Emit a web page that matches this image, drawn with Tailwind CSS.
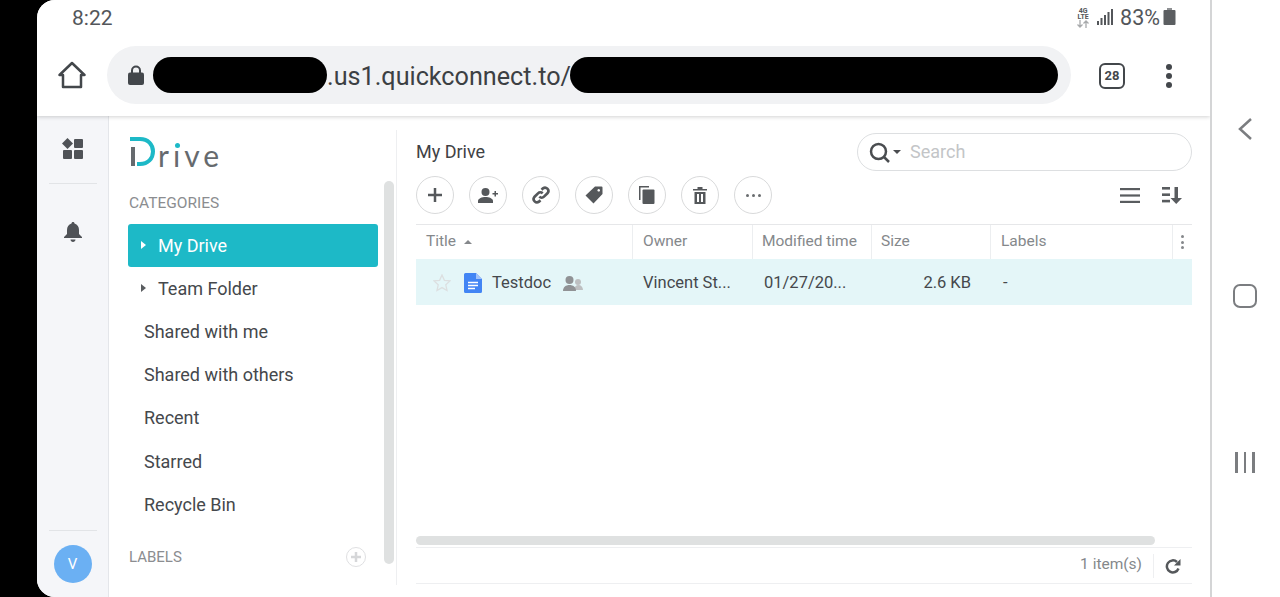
<!DOCTYPE html>
<html lang="en">
<head>
    <meta charset="UTF-8">
    <meta name="viewport" content="width=device-width, initial-scale=1.0">
    <title>Drive - My Drive</title>
    <script src="https://cdn.jsdelivr.net/npm/@tailwindcss/browser@4"></script>
</head>
<body class="bg-black font-[Roboto,sans-serif] overflow-hidden">
<div class="flex h-[597px] w-[1280px] pl-[37px]">
    <!-- phone screen -->
    <div class="w-[1175px] h-full bg-white rounded-l-[18px] overflow-hidden flex flex-col border-r-2 border-[#d4d5d6]">
        <!-- status bar + browser bar -->
        <div class="h-[116px] shrink-0 flex flex-col shadow-[0_1px_4px_rgba(0,0,0,0.18)] z-10 bg-white">
            <div class="h-[46px] flex justify-between pl-[35px] pr-[34px] pt-[5px] text-[#53565a]">
                <span class="text-[21px] leading-[26px]">8:22</span>
                <div class="flex items-start gap-[7px]">
                    <div class="flex flex-col items-center pt-[3px] w-[14px]">
                        <span class="text-[7px] leading-[6px] font-bold">4G</span>
                        <span class="text-[7px] leading-[6px] font-bold">LTE</span>
                        <svg width="14" height="8" viewBox="0 0 13 8" fill="none" stroke="#a8aaac" stroke-width="1.3"><path d="M3.5 0v7M1 4.5 3.5 7 6 4.5M9.5 8V1M7 3.500 9.500 1 12 3.500"/></svg>
                    </div>
                    <svg width="16" height="18" viewBox="0 0 16 18" fill="#53565a" class="mt-[4px]"><rect x="0" y="12" width="2" height="4"/><rect x="3.500" y="9" width="2" height="7"/><rect x="7" y="6" width="2" height="10"/><rect x="10.500" y="3" width="2" height="13"/><rect x="14" y="0" width="2" height="16"/></svg>
                    <span class="text-[21.500px] leading-[26px]">83%</span>
                    <svg width="13" height="18" viewBox="0 0 13 18" class="-ml-[4px] mt-[3px]"><path d="M4 0h5v2H4z" fill="#8e9093"/><rect x="0.500" y="2" width="12" height="15" rx="1" fill="#5b5e61"/></svg>
                </div>
            </div>
            <div class="flex items-center h-[58px]">
                <div class="w-[70px] flex justify-center">
                    <svg width="28" height="28" viewBox="0 0 28 28" fill="none" stroke="#43474b" stroke-width="2.500" stroke-linejoin="round"><path d="M1.500 14 14 2l12.500 12H23v12H5V14z"/></svg>
                </div>
                <div class="w-[964px] h-[58px] rounded-full bg-[#f1f2f4] flex items-center pl-[21px]">
                    <svg width="16" height="20" viewBox="0 0 16 20" class="shrink-0"><path d="M4 9V5.500a4 4 0 0 1 8 0V9" fill="none" stroke="#43474b" stroke-width="2"/><rect y="7.500" width="16" height="12.500" rx="2" fill="#43474b"/></svg>
                    <div class="w-[174px] h-[36px] rounded-full bg-black ml-[9px] shrink-0"></div>
                    <span class="text-[25.200px] text-[#3c4043] leading-none w-[243px] shrink-0 whitespace-nowrap pt-[4px]">.us1.quickconnect.to/</span>
                    <div class="w-[488px] h-[36px] rounded-full bg-black shrink-0"></div>
                </div>
                <div class="ml-[28px] mt-[1px] w-[26px] h-[26px] rounded-[6px] border-[2.500px] border-[#43474b] flex items-center justify-center text-[13px] font-bold text-[#43474b]">28</div>
                <div class="ml-[41px] mt-[1px] flex flex-col gap-[3px]">
                    <span class="w-[6px] h-[6px] rounded-full bg-[#43474b]"></span>
                    <span class="w-[6px] h-[6px] rounded-full bg-[#43474b]"></span>
                    <span class="w-[6px] h-[6px] rounded-full bg-[#43474b]"></span>
                </div>
            </div>
        </div>

        <div class="flex flex-1 min-h-0">
            <!-- icon rail -->
            <div class="w-[72px] shrink-0 bg-[#f5f6f9] border-r border-[#e4e6ea] flex flex-col items-center">
                <svg width="22" height="22" viewBox="0 0 22 22" fill="#4f5257" class="mt-[22px]"><path d="M5.500 0 11 5.500 5.500 11 0 5.500z"/><rect x="12" y="1" width="9" height="9" rx="1"/><rect x="1" y="12" width="9" height="9" rx="1"/><rect x="12" y="12" width="9" height="9" rx="1"/></svg>
                <div class="w-[48px] h-px bg-[#e2e4e7] mt-[23px]"></div>
                <svg width="18" height="20" viewBox="0 0 18 20" fill="#4f5257" class="mt-[38px]"><path d="M9 0c1 0 1.500.7 1.500 1.500C13.500 2.300 15 5 15 8v4l3 3v1H0v-1l3-3V8c0-3 1.500-5.700 4.500-6.500C7.500.7 8 0 9 0z"/><path d="M6.500 17.500h5C11.500 19 10.300 20 9 20s-2.500-1-2.500-2.500z"/></svg>
                <div class="w-[48px] h-px bg-[#e2e4e7] mt-auto"></div>
                <div class="w-[38px] h-[38px] rounded-full bg-[#6bb0f3] flex items-center justify-center text-white text-[15px] mt-[14px] mb-[14px]">V</div>
            </div>

            <!-- sidebar -->
            <div class="w-[288px] shrink-0 pt-[14px] pb-[12px]">
                <div class="h-full border-r border-[#eeeff1] flex">
                    <div class="w-[275px] shrink-0 flex flex-col">
                        <div class="relative h-[38px] pl-[20px] flex items-start">
                            <svg width="30" height="30" viewBox="0 0 30 30" fill="none" class="mt-[7px] shrink-0">
                                <path d="M1 2h10c8 0 13 5.500 13 12.500S19 27 11 27H8" stroke="#1db9c7" stroke-width="4"/>
                                <path d="M4 10v19" stroke="#666a6e" stroke-width="4"/>
                            </svg>
                            <span class="font-[Lato,sans-serif] text-[30px] leading-[36px] tracking-[4px] text-[#666a6e] -ml-[1px] mt-[7px]">rıve</span>
                            <span class="absolute left-[66px] top-[13px] w-[5px] h-[5px] rounded-full bg-[#1db9c7]"></span>
                        </div>
                        <div class="text-[15.500px] text-[#8b8d90] pl-[20px] mt-[26px] leading-[18px]">CATEGORIES</div>
                        <div class="ml-[19px] mt-[12px] h-[43px] w-[250px] rounded-[3px] bg-[#1db9c7] flex items-center text-white text-[18px] pl-[13px] pb-[1px]">
                            <span class="w-0 h-0 border-y-[4.500px] border-y-transparent border-l-[5px] border-l-white mr-[12px]"></span>My Drive
                        </div>
                        <div class="ml-[19px] h-[43px] flex items-center text-[#45484c] text-[18px] pl-[13px] pb-[1px]">
                            <span class="w-0 h-0 border-y-[4.500px] border-y-transparent border-l-[5px] border-l-[#5a5d60] mr-[12px]"></span>Team Folder
                        </div>
                        <div class="pl-[35px] h-[43.400px] flex items-center text-[#45484c] text-[18px] pb-[1px]">Shared with me</div>
                        <div class="pl-[35px] h-[43.400px] flex items-center text-[#45484c] text-[18px] pb-[1px]">Shared with others</div>
                        <div class="pl-[35px] h-[43.400px] flex items-center text-[#45484c] text-[18px] pb-[1px]">Recent</div>
                        <div class="pl-[35px] h-[43.400px] flex items-center text-[#45484c] text-[18px] pb-[1px]">Starred</div>
                        <div class="pl-[35px] h-[43.400px] flex items-center text-[#45484c] text-[18px] pb-[1px]">Recycle Bin</div>
                        <div class="flex items-center justify-between pl-[20px] pr-[18px] mt-[20px] h-[20px]">
                            <span class="text-[15px] text-[#8b8d90]">LABELS</span>
                            <span class="w-[20px] h-[20px] rounded-full border-[1.500px] border-[#dfe0e2] flex items-center justify-center">
                                <svg width="12" height="12" viewBox="0 0 12 12" stroke="#d6d7d9" stroke-width="2.500"><path d="M6 1v10M1 6h10"/></svg>
                            </span>
                        </div>
                    </div>
                    <div class="w-[10px] h-[383px] mt-[51px] rounded-full bg-[#dfe1e1]"></div>
                </div>
            </div>

            <!-- main -->
            <div class="flex-1 min-w-0 pl-[19px] pr-[18px] flex flex-col">
                <div class="flex items-center justify-between pt-[17px]">
                    <span class="text-[18px] text-[#3f4245] leading-[38px]">My Drive</span>
                    <div class="w-[335px] h-[38px] rounded-full border border-[#dddfe1] flex items-center pl-[11px]">
                        <svg width="21" height="21" viewBox="0 0 21 21" fill="none" stroke="#4a4d50" stroke-width="2.500"><circle cx="9.500" cy="9.500" r="7.500"/><path d="m15 15 5 5"/></svg>
                        <span class="w-0 h-0 border-x-[4px] border-x-transparent border-t-[4px] border-t-[#4a4d50] ml-[3px]"></span>
                        <span class="text-[18px] leading-[20px] text-[#c3c5c7] ml-[9px]">Search</span>
                    </div>
                </div>
                <div class="flex items-center mt-[5px] h-[38px]">
                    <div class="flex gap-[15px]">
                        <span class="w-[38px] h-[38px] rounded-full border border-[#d9dadb] flex items-center justify-center">
                            <svg width="16" height="16" viewBox="0 0 16 16" stroke="#55585b" stroke-width="2.500"><path d="M8 1v14M1 8h14"/></svg>
                        </span>
                        <span class="w-[38px] h-[38px] rounded-full border border-[#d9dadb] flex items-center justify-center">
                            <svg width="20" height="15" viewBox="0 0 20 15" fill="#55585b"><circle cx="7.500" cy="4" r="4"/><path d="M0 15v-2c0-2.500 4-4 7.500-4s7.500 1.500 7.500 4v2z"/><path d="M14.500 5h2V3H18v2h2v1.500h-2v2h-1.500v-2h-2z"/></svg>
                        </span>
                        <span class="w-[38px] h-[38px] rounded-full border border-[#d9dadb] flex items-center justify-center">
                            <svg width="20" height="20" viewBox="0 0 18 18" fill="none" stroke="#55585b" stroke-width="2.400"><path d="M7.500 10.500a3 3 0 0 0 4.200 0l3.300-3.300a3 3 0 0 0-4.200-4.200L9.500 4.300"/><path d="M10.500 7.500a3 3 0 0 0-4.200 0L3 10.800A3 3 0 0 0 7.200 15l1.300-1.300"/></svg>
                        </span>
                        <span class="w-[38px] h-[38px] rounded-full border border-[#d9dadb] flex items-center justify-center">
                            <svg width="18" height="18" viewBox="0 0 18 18"><path fill-rule="evenodd" fill="#55585b" d="M10 .500h6.500a1 1 0 0 1 1 1V8L8.500 17.500 .500 9.500zM13.700 3a1.300 1.300 0 1 0 .01 0z"/></svg>
                        </span>
                        <span class="w-[38px] h-[38px] rounded-full border border-[#d9dadb] flex items-center justify-center">
                            <svg width="16" height="18" viewBox="0 0 16 18" fill="#55585b"><path d="M0 0h10v1.500H1.500V14H0z"/><rect x="3.500" y="3.500" width="12" height="14.500" rx="1"/></svg>
                        </span>
                        <span class="w-[38px] h-[38px] rounded-full border border-[#d9dadb] flex items-center justify-center">
                            <svg width="14" height="17" viewBox="0 0 14 17" fill="#55585b"><path d="M0 2h4.500V0h5v2H14v1.500H0z"/><path fill-rule="evenodd" d="M1.500 5h11v12h-11zM4 7v8h2V7zm4 0v8h2V7z"/></svg>
                        </span>
                        <span class="w-[38px] h-[38px] rounded-full border border-[#d9dadb] flex items-center justify-center gap-[3px]">
                            <span class="w-[3px] h-[3px] rounded-full bg-[#6a6d70]"></span>
                            <span class="w-[3px] h-[3px] rounded-full bg-[#6a6d70]"></span>
                            <span class="w-[3px] h-[3px] rounded-full bg-[#6a6d70]"></span>
                        </span>
                    </div>
                    <div class="ml-auto flex items-center gap-[22px] pr-[10px]">
                        <svg width="20" height="15" viewBox="0 0 20 15" fill="#595c5f"><rect width="20" height="2.200"/><rect y="6.400" width="20" height="2.200"/><rect y="12.800" width="20" height="2.200"/></svg>
                        <svg width="20" height="17" viewBox="0 0 20 17" fill="#595c5f"><rect width="8" height="2.600"/><rect y="6.400" width="8" height="2.600"/><rect y="12.800" width="8" height="2.600"/><path d="M12.500 0h3.500v11h4l-5.800 6-5.700-6h4z"/></svg>
                    </div>
                </div>

                <!-- table -->
                <div class="mt-[10px] border-t border-[#e6e7e9] grid grid-cols-[217px_120px_119px_119px_182px_20px] h-[35px] text-[15.500px] text-[#85888b] items-stretch">
                    <div class="flex items-center pl-[10px] pb-[1px] border-r border-[#eceef0]">Title<span class="w-0 h-0 border-x-[4px] border-x-transparent border-b-[4px] border-b-[#85888b] ml-[8px]"></span></div>
                    <div class="flex items-center pl-[10px] pb-[1px] border-r border-[#eceef0]">Owner</div>
                    <div class="flex items-center pl-[9px] pb-[1px] border-r border-[#eceef0] whitespace-nowrap">Modified time</div>
                    <div class="flex items-center pl-[9px] pb-[1px] border-r border-[#eceef0]">Size</div>
                    <div class="flex items-center pl-[10px] pb-[1px] border-r border-[#eceef0]">Labels</div>
                    <div class="flex flex-col items-center justify-center gap-[2.500px] pr-[1px]">
                        <span class="w-[3px] h-[3px] rounded-full bg-[#85888b]"></span>
                        <span class="w-[3px] h-[3px] rounded-full bg-[#85888b]"></span>
                        <span class="w-[3px] h-[3px] rounded-full bg-[#85888b]"></span>
                    </div>
                </div>
                <div class="grid grid-cols-[217px_120px_119px_119px_202px] h-[46px] pt-[2px] bg-[#e4f6f8] text-[16.500px] text-[#45484c] items-center">
                    <div class="flex items-center pl-[17px]">
                        <svg width="18" height="18" viewBox="0 0 18 18" fill="none" stroke="#dcdfe0" stroke-width="1.300"><path d="m9 1 2.400 5.300 5.600.6-4.200 3.900 1.200 5.700L9 13.600l-5 2.900 1.200-5.700L1 6.900l5.600-.6z"/></svg>
                        <svg width="18" height="20" viewBox="0 0 18 20" class="ml-[13px]"><path d="M1.500 0H12l6 6v12.500a1.500 1.500 0 0 1-1.500 1.500h-15A1.500 1.500 0 0 1 0 18.500v-17A1.500 1.500 0 0 1 1.500 0z" fill="#4285f4"/><path d="M12 0v6h6z" fill="#a1c2fa"/><path d="M4 9.500h10M4 12.500h10M4 15.500h7" stroke="#fff" stroke-width="1.300"/></svg>
                        <span class="ml-[10px]">Testdoc</span>
                        <svg width="20" height="15" viewBox="0 0 20 15" class="ml-[12px]"><circle cx="15" cy="6" r="3" fill="#bdbfc1"/><path d="M11 14c0-3 2-5 4.500-5S20 11 20 14z" fill="#bdbfc1"/><circle cx="6.500" cy="4" r="4" fill="#909295"/><path d="M0 15c0-4 3-6 6.500-6s6.500 2 6.500 6z" fill="#909295"/></svg>
                    </div>
                    <div class="pl-[10px]">Vincent St...</div>
                    <div class="pl-[11px]">01/27/20...</div>
                    <div class="pr-[20px] text-right">2.6 KB</div>
                    <div class="pl-[12px]">-</div>
                </div>

                <div class="flex-1"></div>
                <div class="w-[739px] h-[9px] rounded-full bg-[#dfe1e1]"></div>
                <div class="mt-[2px] h-[37px] border-y border-[#eeeff1] flex items-center justify-end text-[15.500px] text-[#85888b]">
                    <span class="pb-[1px]">1 item(s)</span>
                    <span class="w-px h-[24px] bg-[#eeeff1] ml-[11px]"></span>
                    <svg width="16" height="16" viewBox="0 0 16 16" fill="none" class="ml-[11px] mr-[11px]"><path d="M13.500 10.500A6 6 0 1 1 12 4" stroke="#55585b" stroke-width="2.500"/><path d="M15.500 1v6.500H9z" fill="#55585b"/></svg>
                </div>
                <div class="h-[13px]"></div>
            </div>
        </div>
    </div>

    <!-- android nav -->
    <div class="w-[68px] h-full bg-white flex flex-col items-center pr-[2px]">
        <svg width="16" height="24" viewBox="0 0 16 24" fill="none" stroke="#7b7d80" stroke-width="2.500" class="mt-[117px]"><path d="M14 2 3 12l11 10"/></svg>
        <div class="w-[24px] h-[24px] rounded-[7px] border-[2.500px] border-[#7b7d80] mt-[143px]"></div>
        <div class="flex gap-[6px] mt-[144px]">
            <span class="w-[2.500px] h-[21px] bg-[#7b7d80]"></span>
            <span class="w-[2.500px] h-[21px] bg-[#7b7d80]"></span>
            <span class="w-[2.500px] h-[21px] bg-[#7b7d80]"></span>
        </div>
    </div>
</div>
</body>
</html>
